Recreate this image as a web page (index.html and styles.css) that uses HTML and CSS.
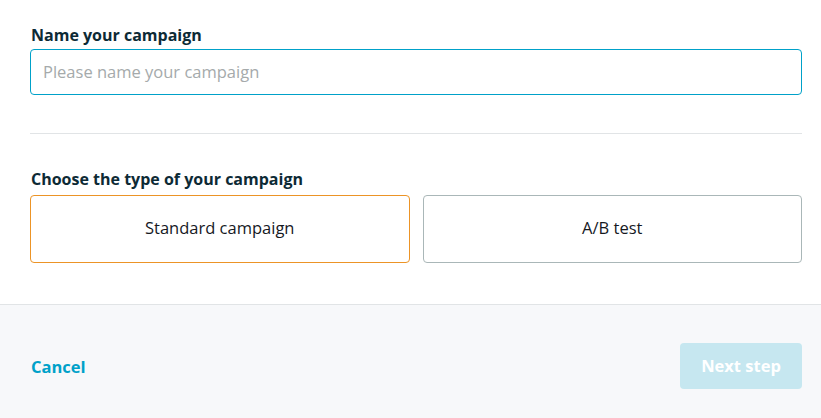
FILE: index.html
```html
<!DOCTYPE html>
<html lang="en">
<head>
<meta charset="utf-8">
<title>Create campaign</title>
<link rel="stylesheet" href="styles.css">
</head>
<body>
<div class="page">
  <main class="content">
    <section class="field">
      <label class="label" for="name">Name your campaign</label>
      <input class="input" id="name" type="text" placeholder="Please name your campaign">
    </section>
    <hr class="divider">
    <section class="field">
      <div class="label">Choose the type of your campaign</div>
      <div class="options">
        <button class="option selected" type="button">Standard campaign</button>
        <button class="option" type="button">A/B test</button>
      </div>
    </section>
  </main>
  <footer class="footer">
    <a class="cancel" href="#">Cancel</a>
    <button class="next" type="button" disabled>Next step</button>
  </footer>
</div>
</body>
</html>
```

FILE: styles.css
```css
* { box-sizing: border-box; }
html, body { margin: 0; padding: 0; background: #fff; }
body {
  font-family: "Open Sans", "Noto Sans", "Liberation Sans", sans-serif;
  color: #16191f;
}
.page {
  width: 821px;
  height: 418px;
  display: flex;
  flex-direction: column;
}
.content {
  padding: 22px 19px 0 30px;
  flex: 0 0 304px;
}
.field { display: flex; flex-direction: column; }
.label {
  font-weight: 700;
  font-size: 16px;
  line-height: 26px;
  color: #0d2a35;
  margin-bottom: 1px;
  padding-left: 1px;
}
.input {
  height: 46px;
  width: 100%;
  border: 1px solid #00a1c9;
  border-radius: 4px;
  padding: 0 12px 2px 12px;
  font-family: inherit;
  font-size: 16.5px;
  color: #16191f;
  outline: none;
}
.input::placeholder { color: #a5aaab; }
.divider {
  border: 0;
  border-top: 1px solid #e1e4e6;
  margin: 38px 0 32px 0;
}
.options {
  display: grid;
  grid-template-columns: 1fr 1fr;
  gap: 13px;
  margin-top: 2px;
}
.option {
  height: 68px;
  background: #fff;
  border: 1px solid #aab7b8;
  border-radius: 4px;
  padding: 0 0 3px 0;
  font-family: inherit;
  font-size: 16.5px;
  font-weight: 500;
  color: #16191f;
  cursor: pointer;
}
.option.selected { border-color: #ec9426; }
.footer {
  flex: 1;
  background: #f7f8fa;
  border-top: 1px solid #e1e4e6;
  display: flex;
  align-items: center;
  justify-content: space-between;
  padding: 0 19px 0 31px;
}
.cancel {
  font-weight: 700;
  font-size: 16.5px;
  color: #00a1c9;
  text-decoration: none;
  margin-top: 10px;
}
.next {
  width: 122px;
  height: 46px;
  border: 0;
  border-radius: 4px;
  background: #c6e7f0;
  color: #fff;
  font-family: inherit;
  font-weight: 700;
  font-size: 16.5px;
  margin-top: 8px;
}
```
